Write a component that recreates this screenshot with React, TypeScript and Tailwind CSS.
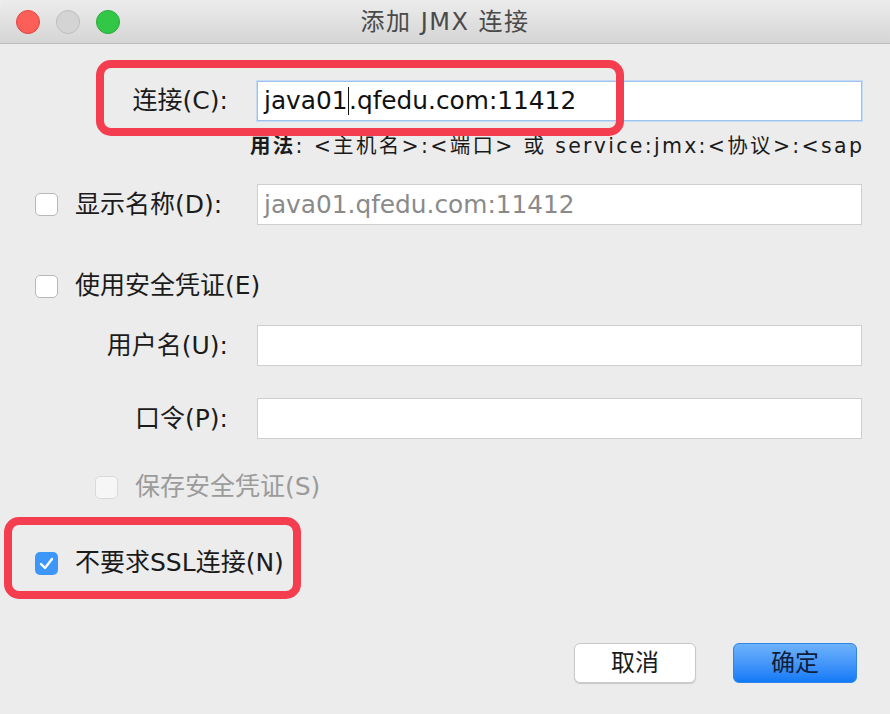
import React from "react";

const font = { fontFamily: '"DejaVu Sans", "Noto Sans CJK SC", sans-serif' };

const Box = ({ checked = false, disabled = false }: { checked?: boolean; disabled?: boolean }) => {
  if (checked) {
    return (
      <div className="w-[23px] h-[23px] rounded-[5px] bg-[#3d97f8] flex items-center justify-center shrink-0">
        <svg width="15" height="13" viewBox="0 0 15 13">
          <path d="M2 7 L6 11 L13 2" stroke="white" strokeWidth="2.4" fill="none" strokeLinecap="round" strokeLinejoin="round" />
        </svg>
      </div>
    );
  }
  return (
    <div
      className={
        disabled
          ? "w-[23px] h-[23px] rounded-[5px] border border-[#d9d9d9] bg-[#f6f6f6] shrink-0"
          : "w-[23px] h-[23px] rounded-[5px] border border-[#b8b8b8] bg-white shrink-0"
      }
    />
  );
};

const Field = ({ value = "", gray = false }: { value?: string; gray?: boolean }) => (
  <div
    className={
      "w-[605px] h-[41px] bg-white border border-[#cfcfcf] flex items-center pl-[6px] text-[24.8px] whitespace-nowrap " +
      (gray ? "text-[#8a8a8a]" : "text-[#111]")
    }
  >
    {value}
  </div>
);

export default function App() {
  return (
    <div className="relative w-[890px] h-[714px] bg-[#ececec] overflow-hidden text-[#1b1b1b]" style={font}>
      {/* title bar */}
      <div className="relative h-[44px] bg-gradient-to-b from-[#ececec] to-[#d5d5d5] border-b border-[#bdbdbd] rounded-tl-[10px] flex items-center justify-center">
        <div className="absolute left-[16px] top-[10px] flex gap-[16px]">
          <div className="w-[24px] h-[24px] rounded-full bg-[#fc5f57] border border-[#e1453f]" />
          <div className="w-[24px] h-[24px] rounded-full bg-[#d4d4d4] border border-[#bdbdbd]" />
          <div className="w-[24px] h-[24px] rounded-full bg-[#33c748] border border-[#28a93a]" />
        </div>
        <div className="text-[24px] text-[#4a4a4a] tracking-[1.5px]">添加 JMX 连接</div>
      </div>

      {/* connection row */}
      <div className="mt-[37px] flex items-center h-[40px]">
        <div className="w-[228px] text-right text-[25px]">连接(C):</div>
        <div className="ml-[29px] w-[605px] h-[40px] bg-white border border-[#9ec2ee] shadow-[0_0_0_1px_#c6dcf6] flex items-center pl-[6px] text-[24.8px] text-[#111] whitespace-nowrap">
          java01
          <span className="inline-block w-[1.5px] h-[28px] bg-[#111]" />
          .qfedu.com:11412
        </div>
      </div>
      <div className="mt-[13px] ml-[250px] h-[24px] whitespace-nowrap text-[20.5px] leading-[24px] tracking-[2.3px]">
        <span className="font-bold">用法</span>: &lt;主机名&gt;:&lt;端口&gt; 或 service:jmx:&lt;协议&gt;:&lt;sap
      </div>

      {/* display name */}
      <div className="mt-[26px] flex items-center h-[41px]">
        <div className="ml-[35px]">
          <Box />
        </div>
        <div className="ml-[17px] w-[182px] text-[25px] whitespace-nowrap">显示名称(D):</div>
        <Field value="java01.qfedu.com:11412" gray />
      </div>

      {/* secure credentials */}
      <div className="mt-[49px] flex items-center h-[24px]">
        <div className="ml-[35px]">
          <Box />
        </div>
        <div className="ml-[17px] text-[25px]">使用安全凭证(E)</div>
      </div>

      <div className="mt-[27px] flex items-center h-[41px]">
        <div className="w-[228px] text-right text-[25px]">用户名(U):</div>
        <div className="ml-[29px]">
          <Field />
        </div>
      </div>

      <div className="mt-[32px] flex items-center h-[41px]">
        <div className="w-[228px] text-right text-[25px]">口令(P):</div>
        <div className="ml-[29px]">
          <Field />
        </div>
      </div>

      <div className="mt-[36px] flex items-center h-[24px]">
        <div className="ml-[95px]">
          <Box disabled />
        </div>
        <div className="ml-[17px] text-[25px] text-[#9b9b9b]">保存安全凭证(S)</div>
      </div>

      <div className="mt-[52px] flex items-center h-[24px]">
        <div className="ml-[35px]">
          <Box checked />
        </div>
        <div className="ml-[17px] text-[25px]">不要求SSL连接(N)</div>
      </div>

      {/* buttons */}
      <div className="mt-[68px] flex justify-end pr-[33px] gap-[37px]">
        <button className="w-[122px] h-[40px] rounded-[6px] bg-white border border-[#c9c9c9] shadow-[0_1px_1px_rgba(0,0,0,0.15)] text-[24px] text-[#1b1b1b]">
          取消
        </button>
        <button className="w-[124px] h-[40px] rounded-[6px] bg-gradient-to-b from-[#6db2fb] to-[#0e7af6] border border-[#2f86e8] text-[24px] text-[#10203a]">
          确定
        </button>
      </div>

      {/* red annotation boxes */}
      <div className="absolute left-[96px] top-[60px] w-[528px] h-[76px] border-[8px] border-[#f53d50] rounded-[15px]" />
      <div className="absolute left-[4px] top-[517px] w-[297px] h-[82px] border-[8px] border-[#f53d50] rounded-[15px]" />
    </div>
  );
}
